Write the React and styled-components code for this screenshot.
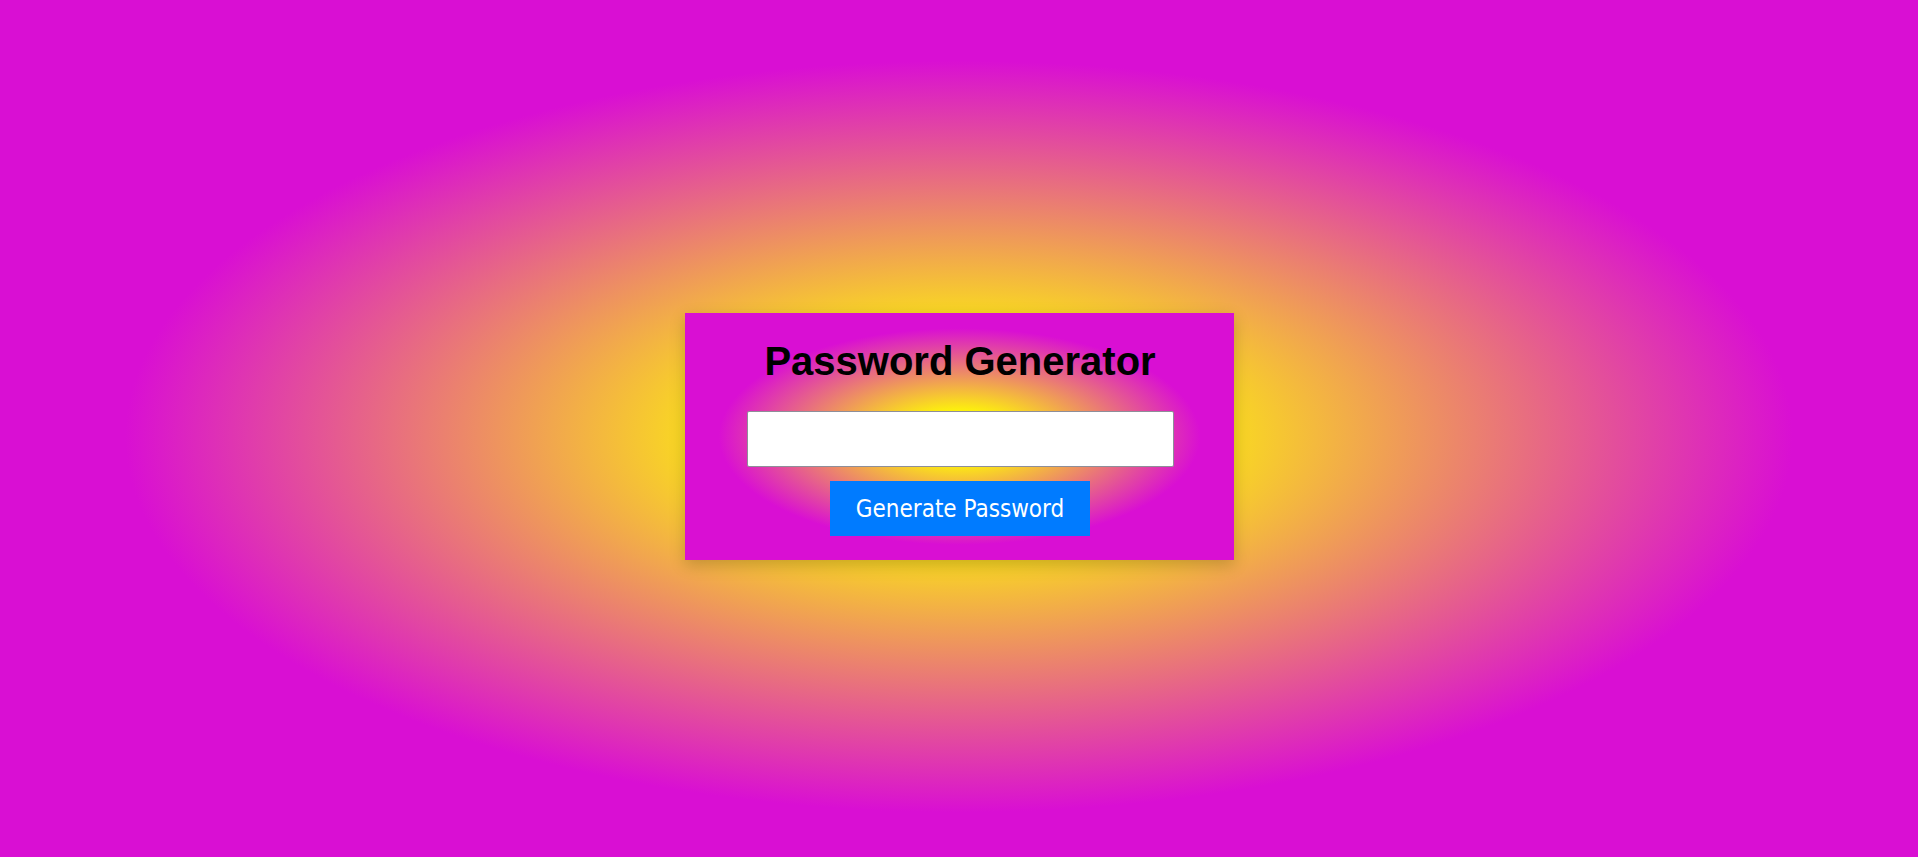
import React from 'react';
import styled, { createGlobalStyle } from 'styled-components';

// Global

const GlobalStyle = createGlobalStyle`
  html {
    background-color: #d90fd3;
    overflow: hidden;
  }
  body {
    margin: 8px;
    font-family: "Liberation Sans", Arial, sans-serif;
  }
`;

const glow = 'radial-gradient(ellipse at center, #ffff00 12%, #d90fd3 62%)';

// Styled Components

const Page = styled.div`
  display: flex;
  justify-content: center;
  align-items: center;
  min-height: 100vh;
  background: ${glow};
`;

const Card = styled.div`
  display: flex;
  flex-direction: column;
  align-items: center;
  box-sizing: border-box;
  width: 549px;
  padding: 25px 60px 24px 62px;
  background: ${glow};
  box-shadow: 0 5px 15px rgba(0, 0, 0, 0.2);
`;

const Title = styled.h1`
  margin: 0 0 27px;
  font-family: "Liberation Sans", Arial, sans-serif;
  font-size: 40px;
  font-weight: bold;
  line-height: 46px;
  color: #000000;
`;

const Input = styled.input`
  box-sizing: border-box;
  width: 427px;
  height: 56px;
  margin: 0 0 14px;
  padding: 0 10px;
  border: 1px solid #8e8e99;
  border-radius: 2px;
  background: #ffffff;
  font-size: 20px;
  outline: none;
`;

const Button = styled.button`
  box-sizing: border-box;
  height: 55px;
  padding: 0 26px;
  border: none;
  background-color: #007bff;
  color: #ffffff;
  font-family: "DejaVu Sans Condensed", "DejaVu Sans", sans-serif;
  font-stretch: condensed;
  font-size: 24px;
  cursor: pointer;
  &:hover {
    background-color: #0069d9;
  }
`;

const App = () => {
  return (
    <Page>
      <GlobalStyle />
      <Card>
        <Title>Password Generator</Title>
        <Input type="text" readOnly />
        <Button type="button">Generate Password</Button>
      </Card>
    </Page>
  );
};

export default App;
